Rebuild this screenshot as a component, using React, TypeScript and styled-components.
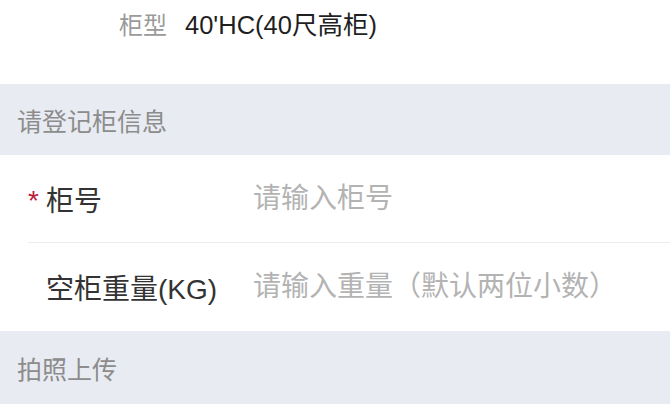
import styled, { createGlobalStyle } from "styled-components";

const GlobalStyle = createGlobalStyle`
  html, body {
    margin: 0;
    padding: 0;
    background: #ffffff;
  }
  body {
    font-family: "Liberation Sans", "Noto Sans CJK SC", sans-serif;
  }
  * {
    box-sizing: border-box;
  }
`;

interface FieldProps {
  label: string;
  placeholder: string;
  required?: boolean;
  divider?: boolean;
}

const Field = ({ label, placeholder, required, divider }: FieldProps) => {
  return (
    <FieldRow divider={divider}>
      <Star>{required ? "*" : ""}</Star>
      <FieldLabel>{label}</FieldLabel>
      <FieldInput placeholder={placeholder} />
    </FieldRow>
  );
};

export default function App() {
  return (
    <>
      <GlobalStyle />
      <Page>
        <InfoRow>
          <InfoLabel>柜型</InfoLabel>
          <InfoValue>40'HC(40尺高柜)</InfoValue>
        </InfoRow>

        <SectionTitle>请登记柜信息</SectionTitle>

        <Field label="柜号" placeholder="请输入柜号" required divider />
        <Field label="空柜重量(KG)" placeholder="请输入重量（默认两位小数）" />

        <SectionTitle tall>拍照上传</SectionTitle>
      </Page>
    </>
  );
}

const Page = styled.div`
  width: 670px;
  min-height: 415px;
  background: #ffffff;
  display: flex;
  flex-direction: column;
`;

const InfoRow = styled.div`
  height: 84px;
  display: flex;
  align-items: baseline;
  gap: 18px;
  padding: 7px 0 0 119px;
`;

const InfoLabel = styled.span`
  font-size: 24px;
  line-height: 36px;
  color: #9a9a9a;
`;

const InfoValue = styled.span`
  font-size: 25.5px;
  line-height: 36px;
  color: #1f1f1f;
`;

const SectionTitle = styled.div<{ tall?: boolean }>`
  height: ${(p) => (p.tall ? "73px" : "71px")};
  background: #e8ebf2;
  display: flex;
  align-items: center;
  padding-left: 17px;
  font-size: 25px;
  color: #8c8c8c;
`;

const FieldRow = styled.div<{ divider?: boolean }>`
  height: 88px;
  display: grid;
  grid-template-columns: 18px 205px 1fr;
  align-items: center;
  margin-left: 28px;
  border-bottom: ${(p) => (p.divider ? "1px solid #ececec" : "none")};
`;

const Star = styled.span`
  color: #b8203c;
  font-size: 28px;
  line-height: 1;
  padding-top: 4px;
`;

const FieldLabel = styled.span`
  font-size: 28px;
  color: #333333;
  white-space: nowrap;
`;

const FieldInput = styled.input`
  border: none;
  outline: none;
  background: transparent;
  padding: 0;
  margin-left: 2px;
  width: 100%;
  font-family: "Liberation Sans", "Noto Sans CJK SC", sans-serif;
  font-size: 28px;
  color: #333333;

  &::placeholder {
    color: #b3b3b3;
  }
`;
